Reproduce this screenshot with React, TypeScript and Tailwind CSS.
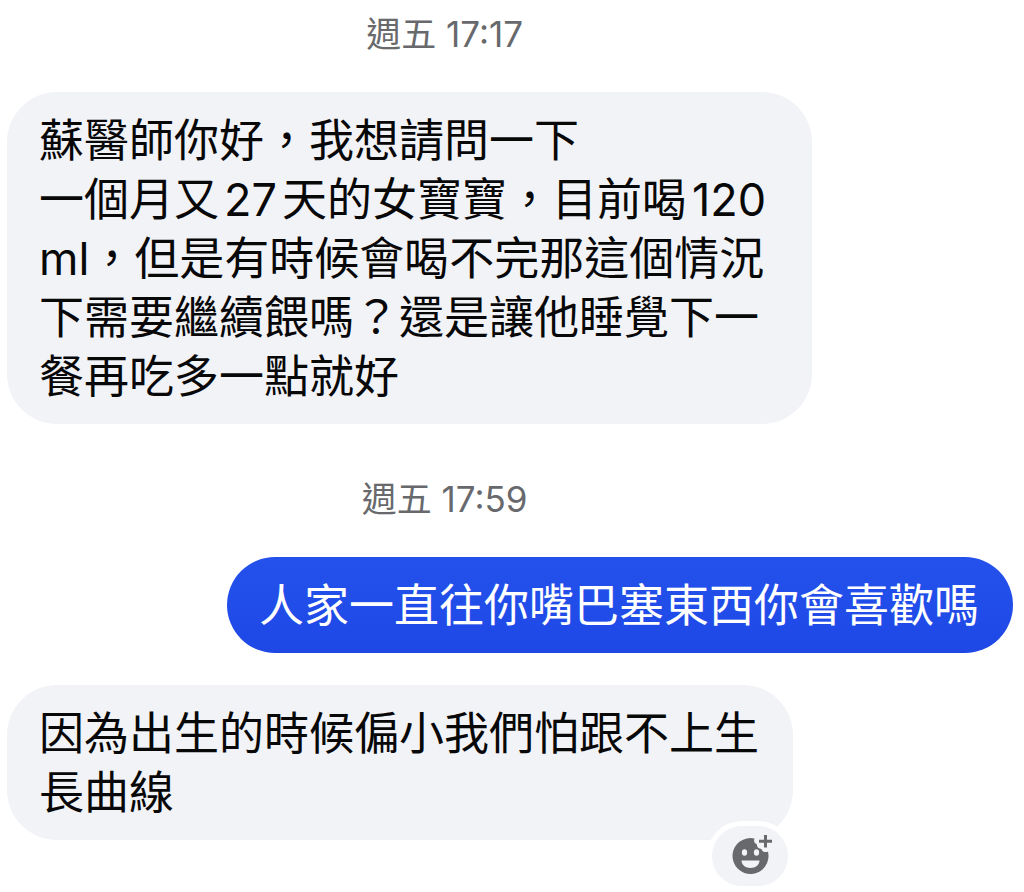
import type { ReactNode } from 'react';

function TimeStamp({ children }: { children: ReactNode }) {
  return (
    <time className="block w-[87%] text-center text-[35px] leading-[44px] text-[#68696c]">{children}</time>
  );
}

function Bubble({ own = false, wide = false, children }: { own?: boolean; wide?: boolean; children: ReactNode }) {
  const tone = own
    ? 'self-end rounded-full bg-linear-to-b from-[#2451ec] to-[#1e48e6] text-white'
    : 'self-start rounded-[50px] bg-[#f2f3f7] text-[#080809]';
  return (
    <div
      className={`relative pt-[19px] pr-[34px] pb-[18px] pl-8 text-[45px] leading-[59px] ${wide ? 'w-4/5' : ''} ${tone}`}
    >
      {children}
    </div>
  );
}

function ReactionButton() {
  return (
    <button
      type="button"
      aria-label="新增心情"
      className="absolute right-0 -bottom-[51px] flex h-[70px] w-[86px] items-center justify-center rounded-full border-[5px] border-white bg-[#f2f3f7] pb-1 pl-1"
    >
      <svg viewBox="0 0 40 40" className="h-10 w-10" aria-hidden="true">
        <path
          d="M22.5 4.45C21.5 7 22.3 9.300 24.800 10.200c.1 2.800 1.800 4.700 4.700 4.700.5 2.500 3 3.800 6.500 2.900A18 18 0 1 1 22.500 4.450Z"
          fill="#68696c"
        />
        <path d="M33.5 1v12.500M27 7.200h13" stroke="#68696c" strokeWidth="3" />
        <ellipse cx="12.500" cy="18.500" rx="2.600" ry="3.200" fill="#f2f3f7" />
        <ellipse cx="24.500" cy="18.500" rx="2.600" ry="3.200" fill="#f2f3f7" />
        <path d="M9.500 26.500h18c0 4.500-4 7.500-9 7.500s-9-3-9-7.500Z" fill="#f2f3f7" />
      </svg>
    </button>
  );
}

export default function App() {
  return (
    <main
      lang="zh-Hant"
      className="flex min-h-screen flex-col bg-white pt-3 pr-[11px] pb-[52px] pl-[7px] font-['Inter','Noto_Sans_CJK_TC',sans-serif]"
    >
      <TimeStamp>週五 17:17</TimeStamp>
      <div className="mt-9 flex flex-col">
        <Bubble wide>
          <p>
            蘇醫師你好，我想請問一下
            <br />
            一個月又<span className="mx-[5px]">27</span>天的女寶寶，目前喝<span className="ml-[5px]">120</span>
            <br />
            ml，但是有時候會喝不完那這個情況
            <br />
            下需要繼續餵嗎？還是讓他睡覺下一
            <br />
            餐再吃多一點就好
          </p>
        </Bubble>
      </div>
      <div className="mt-[53px]">
        <TimeStamp>週五 17:59</TimeStamp>
      </div>
      <div className="mt-9 flex flex-col gap-8">
        <Bubble own>
          <p>人家一直往你嘴巴塞東西你會喜歡嗎</p>
        </Bubble>
        <Bubble>
          <p>
            因為出生的時候偏小我們怕跟不上生
            <br />
            長曲線
          </p>
          <ReactionButton />
        </Bubble>
      </div>
    </main>
  );
}
